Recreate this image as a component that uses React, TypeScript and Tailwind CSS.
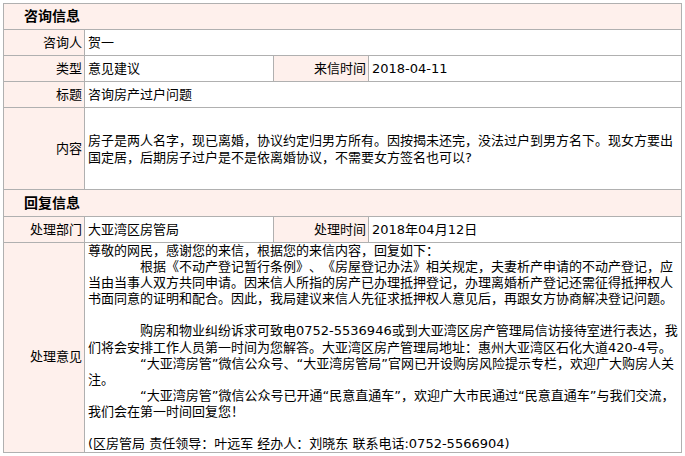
import * as React from 'react';

const font = { fontFamily: '"DejaVu Sans", "Noto Sans CJK SC", sans-serif' };

const IND = '\u3000\u3000\u3000\u3000';

const replyLines = [
  '尊敬的网民，感谢您的来信，根据您的来信内容，回复如下：',
  IND + '根据《不动产登记暂行条例》、《房屋登记办法》相关规定，夫妻析产申请的不动产登记，应',
  '当由当事人双方共同申请。因来信人所指的房产已办理抵押登记，办理离婚析产登记还需征得抵押权人',
  '书面同意的证明和配合。因此，我局建议来信人先征求抵押权人意见后，再跟女方协商解决登记问题。',
  '',
  IND + '购房和物业纠纷诉求可致电0752-5536946或到大亚湾区房产管理局信访接待室进行表达，我',
  '们将会安排工作人员第一时间为您解答。大亚湾区房产管理局地址：惠州大亚湾区石化大道420-4号。',
  IND + '“大亚湾房管”微信公众号、“大亚湾房管局”官网已开设购房风险提示专栏，欢迎广大购房人关',
  '注。',
  IND + '“大亚湾房管”微信公众号已开通“民意直通车”，欢迎广大市民通过“民意直通车”与我们交流，',
  '我们会在第一时间回复您！',
  '',
  '(区房管局 责任领导：叶远军 经办人：刘晓东 联系电话:0752-5566904)',
];

function Label({ children, className = '' }: { children: React.ReactNode; className?: string }) {
  return (
    <td className={`border border-[#b0b0b0] bg-[#fef0ec] text-right pr-[2px] align-middle whitespace-nowrap ${className}`}>
      {children}
    </td>
  );
}

function Value({ children, colSpan, className = '' }: { children: React.ReactNode; colSpan?: number; className?: string }) {
  return (
    <td colSpan={colSpan} className={`border border-[#b0b0b0] bg-white pl-[3px] align-middle ${className}`}>
      {children}
    </td>
  );
}

function Section({ title, h }: { title: string; h: string }) {
  return (
    <tr className={h}>
      <td colSpan={4} className="border border-[#b0b0b0] bg-[#fef0ec] pl-[20px] text-[14px] font-bold align-middle">
        {title}
      </td>
    </tr>
  );
}

export default function App() {
  return (
    <div
      className="w-[685px] h-[456px] bg-white pt-[3px] pl-[3px] text-[13px] text-black [text-spacing-trim:space-all]"
      style={font}
    >
      <table className="table-fixed border-collapse w-[678px] leading-[17px]">
        <colgroup>
          <col className="w-[81px]" />
          <col className="w-[189px]" />
          <col className="w-[95px]" />
          <col className="w-[313px]" />
        </colgroup>
        <tbody>
          <Section title="咨询信息" h="h-[26px]" />
          <tr className="h-[26px]">
            <Label>咨询人</Label>
            <Value colSpan={3}>贺一</Value>
          </tr>
          <tr className="h-[26px]">
            <Label>类型</Label>
            <Value>意见建议</Value>
            <Label>来信时间</Label>
            <Value>2018-04-11</Value>
          </tr>
          <tr className="h-[26px]">
            <Label>标题</Label>
            <Value colSpan={3}>咨询房产过户问题</Value>
          </tr>
          <tr className="h-[82px]">
            <Label>内容</Label>
            <Value colSpan={3}>
              房子是两人名字，现已离婚，协议约定归男方所有。因按揭未还完，没法过户到男方名下。现女方要出
              <br />
              国定居，后期房子过户是不是依离婚协议，不需要女方签名也可以?
            </Value>
          </tr>
          <Section title="回复信息" h="h-[27px]" />
          <tr className="h-[26px]">
            <Label>处理部门</Label>
            <Value>大亚湾区房管局</Value>
            <Label>处理时间</Label>
            <Value>2018年04月12日</Value>
          </tr>
          <tr className="h-[210px]">
            <Label className="pt-[18px]">处理意见</Label>
            <Value colSpan={3} className="leading-[16px] whitespace-pre">
              {replyLines.map((line, i) => (
                <div key={i} className="h-[16.1px]">{line}</div>
              ))}
            </Value>
          </tr>
        </tbody>
      </table>
    </div>
  );
}
